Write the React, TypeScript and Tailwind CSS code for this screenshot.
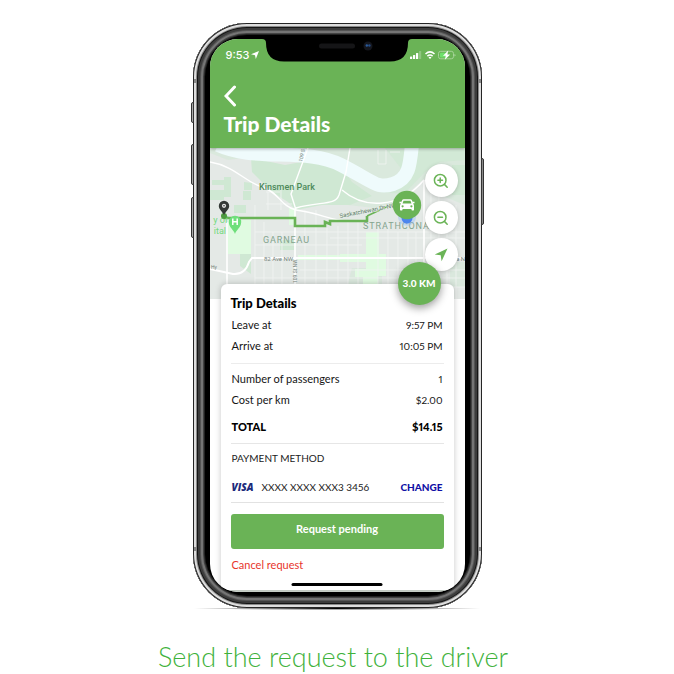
import type { ReactNode } from "react";

function Row({ label, value }: { label: string; value: string }) {
  return (
    <div className="flex h-[21px] items-center justify-between">
      <dt>{label}</dt>
      <dd className="text-[10px] proportional-nums">{value}</dd>
    </div>
  );
}

function MapButton({ label, children }: { label: string; children: ReactNode }) {
  return (
    <button
      type="button"
      aria-label={label}
      className="flex size-[33px] items-center justify-center rounded-full bg-white text-[#6bb457] shadow-[0_1px_4px_rgba(0,0,0,0.2)]"
    >
      {children}
    </button>
  );
}

function Magnifier({ plus }: { plus?: boolean }) {
  return (
    <svg viewBox="0 0 16 16" className="size-4" fill="none" stroke="currentColor" strokeWidth="1.5" strokeLinecap="round">
      <circle cx="7.2" cy="7.2" r="5.8" />
      <path d="M11.4 11.4 14.200 14.200M4.900 7.200h4.600" />
      {plus && <path d="M7.200 4.900v4.600" />}
    </svg>
  );
}

function Notch() {
  return (
    <svg viewBox="0 0 150 24" className="absolute left-1/2 top-0 w-[150px] -translate-x-1/2" aria-hidden="true">
      <path d="M0 0H150Q146 0 146 4Q146 22.500 128 22.500H22Q4 22.500 4 4Q4 0 0 0Z" fill="#000" />
      <rect x="57" y="4.500" width="36" height="5" rx="2.500" fill="#151517" />
      <circle cx="106" cy="7" r="4.500" fill="#14161d" />
      <circle cx="104.800" cy="6.500" r="1.200" fill="#2b5c9c" />
      <circle cx="107.400" cy="6.500" r="1.200" fill="#244c86" />
    </svg>
  );
}

function StatusIcons() {
  return (
    <svg viewBox="0 0 48 12" className="h-3 w-12" fill="#fff" aria-hidden="true">
      <rect x="1" y="7.500" width="2.200" height="2.500" rx=".5" />
      <rect x="4" y="6" width="2.200" height="4" rx=".5" />
      <rect x="7" y="4" width="2.200" height="6" rx=".5" />
      <rect x="10" y="2" width="2.200" height="8" rx=".5" opacity=".25" />
      <g fill="none" stroke="#fff" strokeWidth="1.500">
        <path d="M16.500 5Q21 .8 25.500 5" />
        <path d="M18.400 7.100Q21 4.800 23.600 7.100" />
      </g>
      <path d="M19.500 8.400Q21 7.200 22.500 8.400L21 10Z" />
      <rect x="29.500" y="2.300" width="15" height="7.500" rx="2.200" fill="none" stroke="#a5d398" strokeWidth="1" />
      <rect x="31" y="3.700" width="6" height="4.800" rx="1" fill="#6ee06b" />
      <path d="M45.500 5v2.500q1-.4 1-1.250T45.500 5" fill="#b5dba9" />
      <path d="M39.200 1.500 34 6.800H36.800L35.800 10.800 41.200 5.400H38.400Z" />
    </svg>
  );
}

function TripMap() {
  return (
    <svg viewBox="210 148 255 151" className="block w-full" role="img" aria-label="Route map">
      <rect x="210" y="148" width="255" height="151" fill="#e4e9e6" />
      <g fill="#cfe8d3">
        <path d="M210 148H420L465 148V205L440 195 425 178 400 200 375 208 348 205 340 192 310 163 251 157 228 160 210 153Z" opacity=".45" />
        <path d="M251 158 285 165 312 160 345 172 352 182 372 196 350 205H322L296 210 288 202 272 192 252 172Z" />
        <path d="M385 148H465V160L440 162 425 172 404 194 380 192 410 180Z" opacity=".7" />
        <path d="M212 180h12v5h-12zM224 177h7v20h-7zM244 182l8 1v7h-8zM243 191h8v9h-8zM210 190h14v10h-14zM234 205h12v8h-12zM240 254h11v20l-11-8zM280 240h14v10h-14zM452 165h13v30h-13z" />
        <path d="M352 268h30v31h-38zM450 262h15v25h-15z" opacity=".5" />
      </g>
      <g fill="#e0fbe1">
        <path d="M228 220h23v34h-23zM289 208h6v17h-6zM298 255h62v5h-62z" />
        <path d="M366 232h13v22h7v22h-8v15h-15v-14h-8v-8h11z" />
        <path d="M340 254h36v8h-36zM398 284h40v6h-40z" />
      </g>
      <path d="M218 145C255 162 306 147 341 165S377 189 393 184S410 166 412 144" fill="none" stroke="#effbfc" strokeWidth="14" />

      <g stroke="#f1f4f2" strokeWidth=".8" fill="none">
        <path d="M255 232H465M255 245H362M300 270H465M255 278H465M300 287H465M330 238H465M268 192V210M281 186V210M266 204H292M266 192H280" />
        <path d="M255 205V284M264 222V284M273 232V284M282 232V284M305 210V284M316 210V284M327 228V284M338 226V299M348 222V299M358 222V299M378 222V299M388 222V299M398 232V299M408 232V299M416 232V299M431 190V299M439 190V299M447 205V299M456 205V299" />
        <path d="M378 150v14h8v-14M390 152h10" />
      </g>
      <g stroke="#fff" strokeWidth="1.400" fill="none">
        <path d="M227 222V284M295 210V299M424 180V299" strokeWidth="1.600" />
        <path d="M210 269 233 274Q245 275 249 262L252 258H465" strokeWidth="2" />
        <path d="M210 162C235 166 245 182 262 187S280 206 296 210C320 213 334 222 350 221M308 148 291 194 296 210M296 208C320 201 335 206 339 195L346 172 350 148M342 190C365 210 400 208 424 180" />
      </g>

      <g fontFamily="Roboto, sans-serif" fill="#75837b" fontSize="6">
        <text x="264" y="261">82 Ave NW</text>
        <text x="456" y="261">a N</text>
        <text transform="translate(297 283) rotate(-90)" fontSize="5">109 St NW</text>
        <text transform="translate(302 162) rotate(-76)" fontSize="5">109 S</text>
        <text x="211" y="269" fontSize="5">Hy</text>
      </g>

      <path d="M224 218H295V226H325V222L330 224V221H367V216" fill="none" stroke="#69b356" strokeWidth="2.600" />
      <path d="M367 216 397 202" fill="none" stroke="#69b356" strokeWidth="1.600" />
      <text transform="translate(340 218) rotate(-11)" fontFamily="Roboto, sans-serif" fontSize="6" fill="#5d7766" stroke="#e4efe6" strokeWidth="1" paintOrder="stroke">
        Saskatchewan Dr NW
      </text>

      <g fontFamily="Roboto, sans-serif">
        <text x="259" y="190" fontSize="9" fontWeight="500" fill="#4d8a5a">Kinsmen Park</text>
        <text x="263" y="243" fontSize="9" className="tracking-widest" fill="#83a48e">GARNEAU</text>
        <text x="363" y="229" fontSize="9" className="tracking-widest" fill="#83a48e">STRATHCONA</text>
        <g fontSize="9" fill="#73d97d" textAnchor="end">
          <text x="228" y="223">y of</text>
          <text x="226" y="234">ital</text>
        </g>
      </g>

      <circle cx="224" cy="216" r="3" fill="#4c9a3f" />
      <path d="M224 215C222 211 218.800 209.500 218.800 206A5.200 5.200 0 0 1 229.200 206C229.200 209.500 226 211 224 215Z" fill="#333836" />
      <circle cx="224" cy="205.800" r="2.100" fill="#e7e7e7" />
      <circle cx="224" cy="205.800" r=".8" fill="#333836" />
      <path d="M235 234C234 230 228.800 227.500 228.800 222A6.200 6.200 0 0 1 241.200 222C241.200 227.500 236 230 235 234Z" fill="#6fdf7b" />
      <path d="M232.800 218.500v6.500M237.200 218.500v6.500M232.800 221.800h4.400" stroke="#fff" strokeWidth="1.500" fill="none" />

      <circle cx="407" cy="217" r="9" fill="#8ab4f8" opacity=".35" />
      <circle cx="407" cy="218" r="5.500" fill="#4b85ee" />
      <circle cx="407" cy="205" r="14.200" fill="#6ab356" />
      <g transform="translate(407 205)">
        <path d="M-7 .5 -6 -2.200 -4.800 -5Q-4.400 -5.800 -3.400 -5.800H3.400Q4.400 -5.800 4.800 -5L6 -2.200 7 .5V4.800Q7 5.500 6.300 5.500H5.200Q4.500 5.500 4.500 4.800V4H-4.500V4.800Q-4.500 5.500 -5.200 5.500H-6.300Q-7 5.500 -7 4.800Z" fill="#fff" />
        <path d="M-3.500 -4.200H3.500L4.500 -1.400H-4.500Z" fill="#6ab356" />
        <circle cx="-4.400" cy="1.300" r="1.100" fill="#6ab356" />
        <circle cx="4.400" cy="1.300" r="1.100" fill="#6ab356" />
        <path d="M-7.500 -2.500h2M7.500 -2.500h-2" stroke="#fff" strokeWidth="1.400" />
      </g>
    </svg>
  );
}

function TripCard() {
  return (
    <section className="relative -mt-[15px] mx-[11px] rounded-t-md rounded-b-sm bg-white px-[10px] pt-2 pb-[9px] text-[11px] text-[#151515] shadow-[0_0_6px_rgba(0,0,0,0.22)]">
      <div className="absolute -top-[22px] right-[13px] flex size-[43px] items-center justify-center rounded-full bg-[#6ab356] text-[10px] font-black text-white shadow-[0_3px_8px_rgba(0,0,0,0.4)]">
        3.0 KM
      </div>
      <h2 className="flex h-[23px] items-center text-[13px] font-black text-black">Trip Details</h2>
      <dl className="border-b border-[#ececec] px-px pb-[6px]">
        <Row label="Leave at" value="9:57 PM" />
        <Row label="Arrive at" value="10:05 PM" />
      </dl>
      <dl className="border-b border-[#e6e6e6] px-px pt-[5px]">
        <Row label="Number of passengers" value="1" />
        <Row label="Cost per km" value="$2.00" />
        <div className="flex h-8 items-center justify-between font-black text-black">
          <dt>TOTAL</dt>
          <dd className="proportional-nums">$14.15</dd>
        </div>
      </dl>
      <div className="border-b border-[#e2e2e2] px-px">
        <h3 className="flex h-[29px] items-center text-[10px] text-[#222]">PAYMENT METHOD</h3>
        <div className="flex h-[29px] items-center text-[10px]">
          <span className="font-['Open_Sans'] font-extrabold text-[#1b2a7b] italic">VISA</span>
          <span className="ml-2 pb-px text-[#222] proportional-nums">XXXX XXXX XXX3 3456</span>
          <button type="button" className="ml-auto font-black text-[#1010a5]">CHANGE</button>
        </div>
      </div>
      <button type="button" className="mt-[11px] h-[35px] w-full rounded-[3px] bg-[#6ab356] pb-1 font-bold text-white">
        Request pending
      </button>
      <button type="button" className="block h-8 px-px text-[#e8352c]">Cancel request</button>
    </section>
  );
}

export default function App() {
  return (
    <main className="flex min-h-screen flex-col items-center bg-white pt-[23px] font-['Lato',sans-serif]">
      <div className="relative w-[289px] rounded-[54px] bg-black px-[17px] pt-4 pb-4 shadow-[inset_0_0_0_1px_#252525,inset_0_0_0_3px_#dedede,inset_0_0_0_4px_#8b8b8b,inset_0_0_0_5px_#151515,inset_0_0_0_7px_#3c3c3c,inset_0_0_0_8px_#555,inset_0_0_0_10px_#757575,inset_0_0_0_11px_#444,inset_0_0_0_12px_#222]">
        <i className="absolute top-[79px] -left-[2px] h-[21px] w-[3px] rounded-l-xs border border-[#333] bg-[#aaa]" />
        <i className="absolute top-[121px] -left-[2px] h-[41px] w-[3px] rounded-l-xs border border-[#333] bg-[#aaa]" />
        <i className="absolute top-[174px] -left-[2px] h-[41px] w-[3px] rounded-l-xs border border-[#333] bg-[#aaa]" />
        <i className="absolute top-[135px] -right-[2px] h-[67px] w-[3px] rounded-r-xs border border-[#333] bg-[#888]" />
        <i className="absolute top-[56px] left-px h-1 w-[3px] bg-[#888]" />
        <i className="absolute top-[56px] right-px h-1 w-[3px] bg-[#888]" />
        <i className="absolute bottom-[57px] left-px h-1 w-[3px] bg-[#888]" />
        <i className="absolute right-px bottom-[57px] h-1 w-[3px] bg-[#888]" />

        <div className="relative overflow-hidden rounded-[28px] bg-white">
          <header className="relative z-10 bg-[#6ab356] pb-[10px] text-white shadow-[0_1px_3px_rgba(0,0,0,0.3)]">
            <Notch />
            <div className="flex h-8 items-center justify-between pr-2 pl-4">
              <span className="flex items-center gap-[2px] font-['Inter'] text-[11px] font-medium">
                9:53
                <svg viewBox="0 0 8 8" className="size-2" fill="#fff" aria-hidden="true">
                  <path d="M8 0 4.800 8 4 4.200 0 3.300Z" />
                </svg>
              </span>
              <StatusIcons />
            </div>
            <button type="button" aria-label="Back" className="mt-[14px] ml-[14px] block">
              <svg viewBox="0 0 12 22" className="h-[22px] w-3" fill="none" stroke="currentColor" strokeWidth="3">
                <path d="M10.500 2 2 11l8.500 9" strokeLinecap="round" />
              </svg>
            </button>
            <h1 className="mt-[3px] ml-[14px] text-[21px] leading-7 font-black">Trip Details</h1>
          </header>
          <div className="relative">
            <TripMap />
            <div className="absolute top-4 right-[7px] flex flex-col gap-1">
              <MapButton label="Zoom in"><Magnifier plus /></MapButton>
              <MapButton label="Zoom out"><Magnifier /></MapButton>
              <MapButton label="My location">
                <svg viewBox="0 0 14 14" className="size-[14px]" fill="currentColor">
                  <path d="M13.500 .5 7.600 13.300 6.700 7.300 .7 6.400Z" />
                </svg>
              </MapButton>
            </div>
          </div>
          <TripCard />
          <div className="h-[2px] bg-[#d5ded6]" />
          <i className="absolute bottom-[6px] left-1/2 h-[3px] w-[91px] -translate-x-1/2 rounded-full bg-black" />
        </div>
      </div>
      <div className="-mt-px h-[3px] w-[286px] bg-radial-[closest-side] from-black to-transparent" />
      <p className="mt-[30px] pr-2 text-[27px] leading-[34px] font-light text-[#3fb23c]">Send the request to the driver</p>
    </main>
  );
}
